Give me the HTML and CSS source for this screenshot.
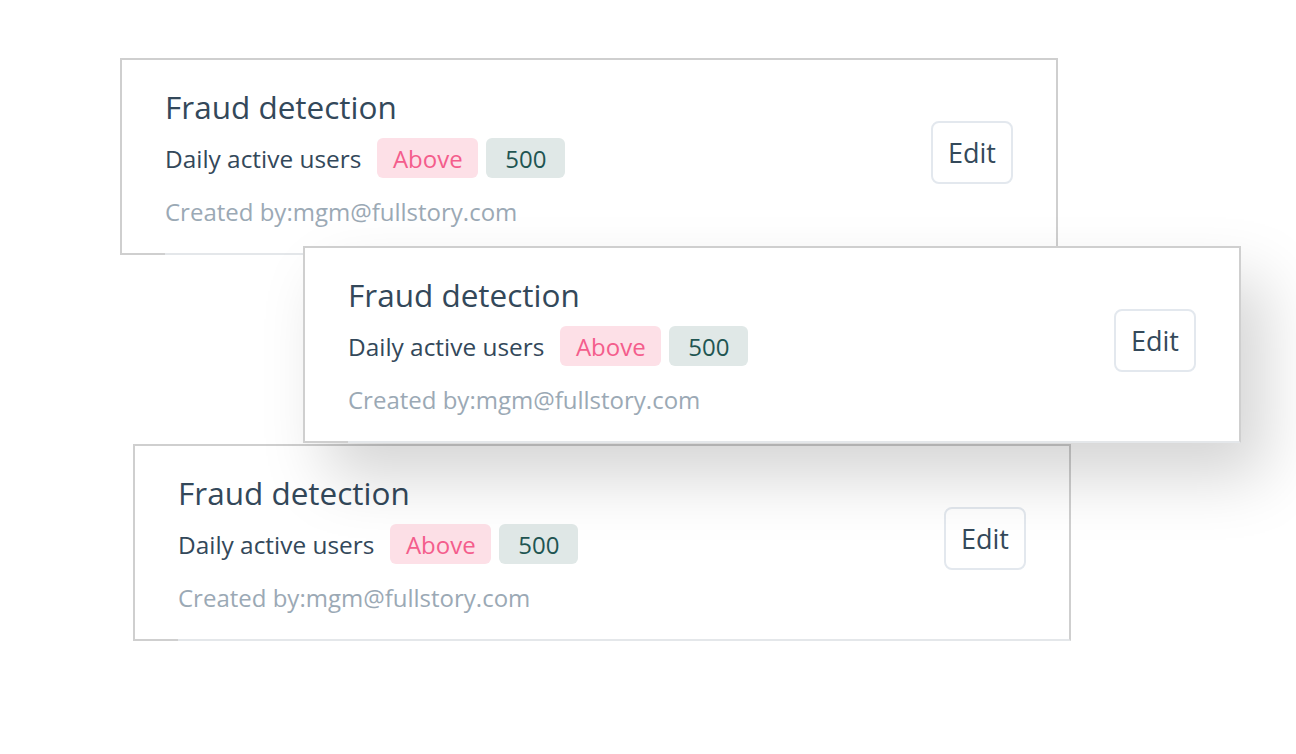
FILE: index.html
```html
<!DOCTYPE html>
<html lang="en">
<head>
<meta charset="utf-8">
<title>Alerts</title>
<link rel="stylesheet" href="styles.css">
</head>
<body>
<main class="stack">
  <section class="card card-one">
    <div class="card-body">
      <h2 class="card-title">Fraud detection</h2>
      <div class="rule">
        <span class="metric">Daily active users</span>
        <span class="badge badge-op">Above</span>
        <span class="badge badge-val">500</span>
      </div>
      <p class="creator">Created by:mgm@fullstory.com</p>
    </div>
    <button class="edit-btn" type="button">Edit</button>
  </section>
  <section class="card card-two">
    <div class="card-body">
      <h2 class="card-title">Fraud detection</h2>
      <div class="rule">
        <span class="metric">Daily active users</span>
        <span class="badge badge-op">Above</span>
        <span class="badge badge-val">500</span>
      </div>
      <p class="creator">Created by:mgm@fullstory.com</p>
    </div>
    <button class="edit-btn" type="button">Edit</button>
  </section>
  <section class="card card-three">
    <div class="card-body">
      <h2 class="card-title">Fraud detection</h2>
      <div class="rule">
        <span class="metric">Daily active users</span>
        <span class="badge badge-op">Above</span>
        <span class="badge badge-val">500</span>
      </div>
      <p class="creator">Created by:mgm@fullstory.com</p>
    </div>
    <button class="edit-btn" type="button">Edit</button>
  </section>
</main>
</body>
</html>
```

FILE: styles.css
```css
* { box-sizing: border-box; }

html, body {
  margin: 0;
  padding: 0;
  background: #ffffff;
}

body {
  width: 1296px;
  height: 754px;
  overflow: hidden;
  font-family: "Open Sans", "Lato", sans-serif;
  color: #34495a;
}

.stack {
  display: flex;
  flex-direction: column;
  align-items: flex-start;
  padding-top: 58px;
}

.card {
  position: relative;
  width: 938px;
  height: 197px;
  background: #ffffff;
  border: 2px solid #cfcfcf;
  border-bottom-color: #e4e7ea;
  display: flex;
  align-items: center;
  justify-content: space-between;
  padding: 0 43px;
}

.card::after {
  content: "";
  position: absolute;
  left: -2px;
  bottom: -2px;
  width: 45px;
  height: 2px;
  background: #cfcfcf;
}

.card-one {
  margin-left: 120px;
  z-index: 1;
}

.card-two {
  margin-left: 303px;
  margin-top: -9px;
  z-index: 3;
  box-shadow: 24px 34px 60px rgba(0, 0, 0, 0.17);
}

.card-three {
  margin-left: 133px;
  margin-top: 1px;
  z-index: 2;
}

.card-body {
  display: flex;
  flex-direction: column;
  align-self: flex-start;
  padding-top: 27px;
}

.card-title {
  margin: 0;
  font-size: 31.5px;
  line-height: 40px;
  font-weight: 400;
  color: #33485a;
}

.rule {
  display: flex;
  align-items: center;
  gap: 8px;
  margin-top: 11px;
}

.metric {
  font-size: 24.4px;
  color: #33485a;
  margin-right: 8px;
}

.badge {
  display: inline-flex;
  align-items: center;
  justify-content: center;
  height: 40px;
  border-radius: 6px;
  font-size: 24px;
}

.badge-op {
  width: 101px;
  background: #fde0e7;
  color: #f45d8c;
}

.badge-val {
  width: 79px;
  background: #e0e8e7;
  color: #1f5552;
}

.creator {
  margin: 19px 0 0;
  font-size: 24px;
  line-height: 30px;
  color: #9ba9b5;
}

.edit-btn {
  width: 82px;
  height: 63px;
  margin-top: -8px;
  border: 2px solid #e3e8ee;
  border-radius: 8px;
  background: #ffffff;
  font-family: inherit;
  font-size: 27px;
  color: #34495a;
  padding: 0;
  cursor: pointer;
}
```
